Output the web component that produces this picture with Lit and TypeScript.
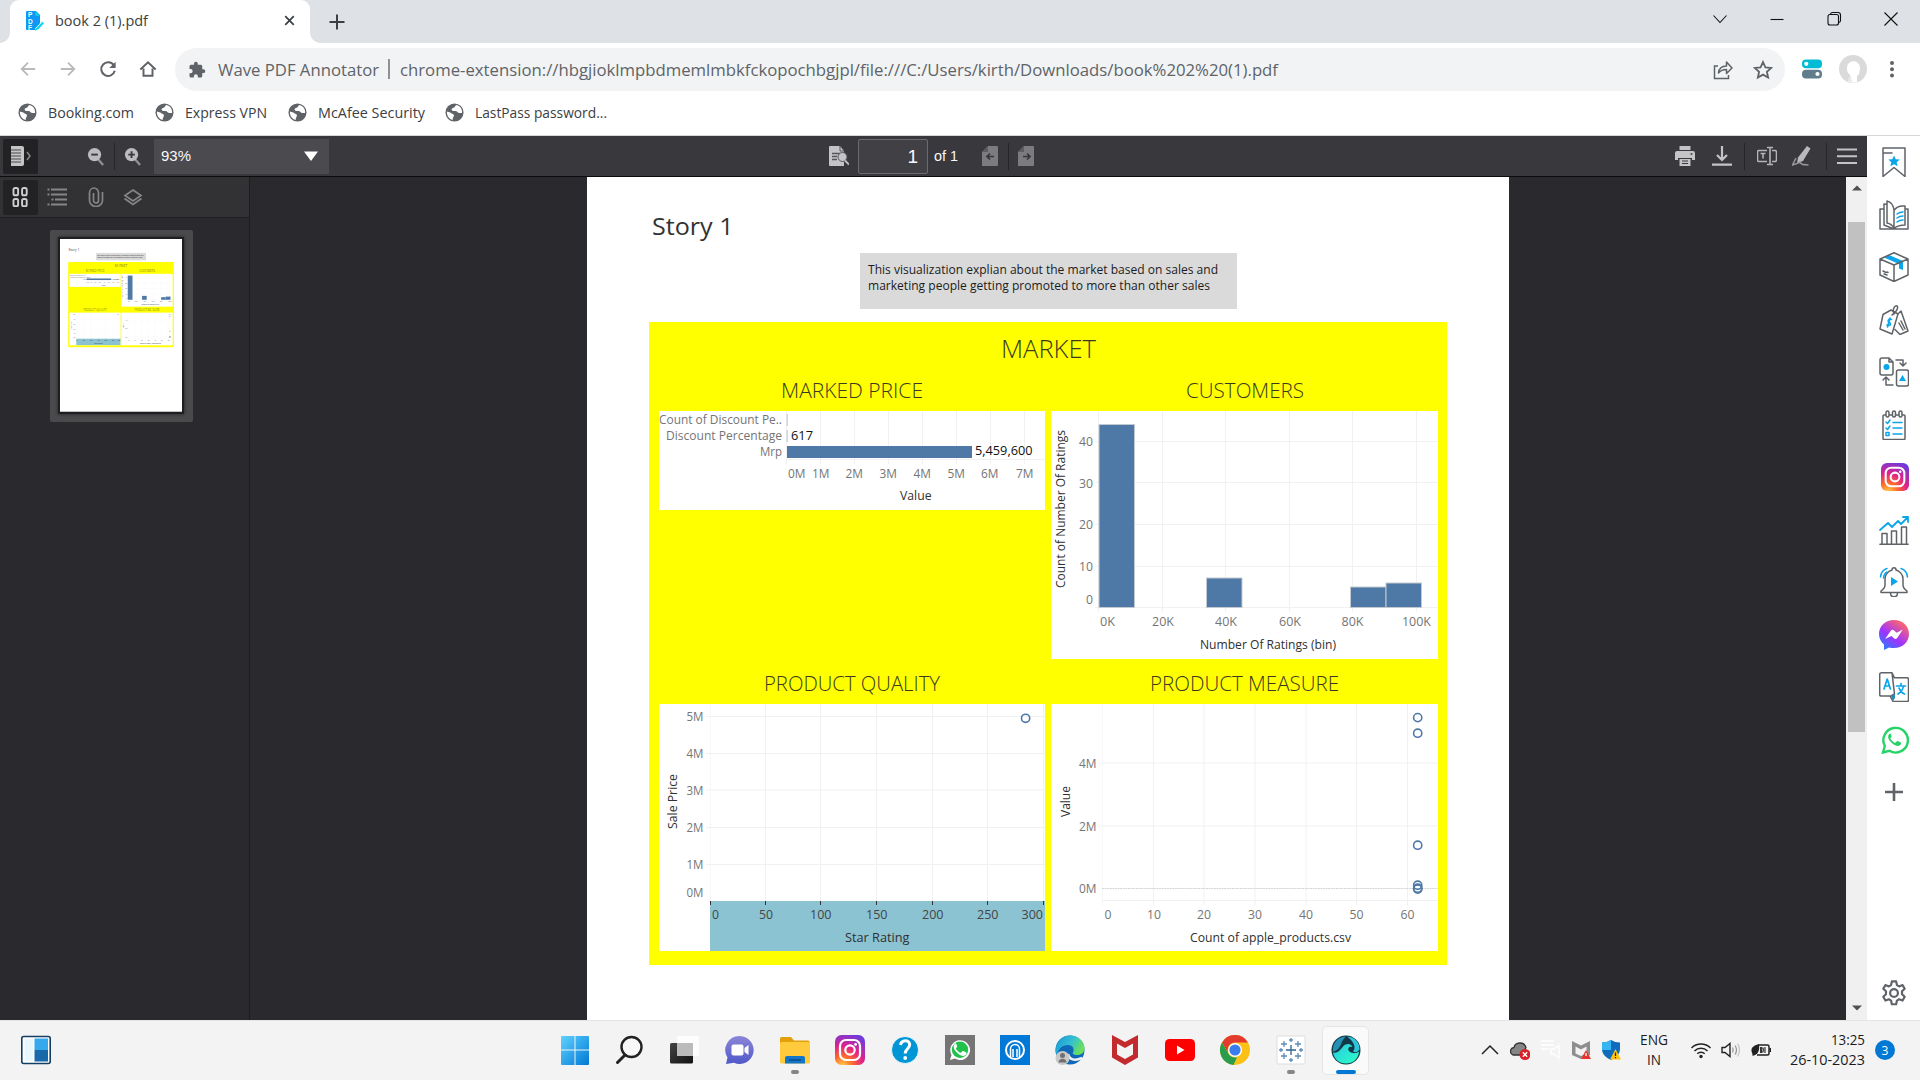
import { LitElement, html, svg, css, TemplateResult } from "lit";
import { customElement } from "lit/decorators.js";

/* A line of text set to an exact width. */
const fit = (text: string, width: number, size: number, weight = 400) => html`<svg class="fit" width=${width} height=${Math.round(size * 1.5)} overflow="visible"><text x="0" y=${Math.round(size * 1.1)} font-size=${size} font-weight=${weight} textLength=${width} lengthAdjust="spacingAndGlyphs" fill="currentColor">${text}</text></svg>`;

const icon = (size: number, box: string, body: unknown, cls = "") => html`<svg class="icon ${cls}" width=${size} height=${size} viewBox=${box}>${body}</svg>`;

/* ---------- report charts ---------- */
const label = (s: string, x: number, y: number, w: number, cls = "tick", size = 13) =>
  svg`<text class=${cls} x=${x} y=${y} font-size=${size} textLength=${w} lengthAdjust="spacingAndGlyphs">${s}</text>`;
const vlabel = (s: string, x: number, y: number, w: number) =>
  svg`<text class="axis" font-size="12.5" transform="translate(${x} ${y}) rotate(-90)" textLength=${w} lengthAdjust="spacingAndGlyphs">${s}</text>`;
const vline = (x: number, a: number, b: number) => svg`<path class="grid" d="M${x} ${a}V${b}"/>`;
const hline = (y: number, a: number, b: number) => svg`<path class="grid" d="M${a} ${y}H${b}"/>`;
const dot = (x: number, y: number) => svg`<circle cx=${x} cy=${y} r="4.1" fill="none" stroke="#4e79a7" stroke-width="1.6"/>`;

const markedPrice = svg`
  ${[786.5, 820.5, 854.5, 888.5, 922.5, 956.5, 990.5, 1024.5].map((x) => vline(x, 411, 464))}
  ${hline(459.5, 786, 1045)}
  <path d="M787.2 414v12M787.2 430v12" stroke="#c9d3df" stroke-width="1.4"/>
  <rect x="787" y="446" width="185" height="12" fill="#4e79a7"/>
  ${label("Count of Discount Pe..", 659, 424, 123)}
  ${label("Discount Percentage", 666, 440, 116)}
  ${label("Mrp", 760, 456, 22)}
  ${label("617", 791, 440, 22, "value")}
  ${label("5,459,600", 975, 455, 57.5, "value")}
  ${[788, 812, 845.5, 879.5, 913.5, 947.5, 981, 1016].map((x, i) => label(i + "M", x, 478, 17.5))}
  ${label("Value", 900, 500, 31.5, "axis")}`;

const customers = svg`
  ${[1098.5, 1162.5, 1225.5, 1289.5, 1352.5, 1416.5].map((x) => vline(x, 411, 612))}
  ${[441.5, 482.5, 524.5, 566.5].map((y) => hline(y, 1095, 1438))}
  ${hline(607.5, 1095, 1438)}
  ${[[1099, 425], [1206.5, 578.5], [1350.5, 587.5], [1386, 583.5]].map(([x, y]) =>
    svg`<rect x=${x} y=${y - 0.5} width="35.5" height=${608 - y} fill="#4e79a7" stroke="#c3c9d0"/>`)}
  ${vlabel("Count of Number Of Ratings", 1065, 588, 158)}
  ${label("40", 1079, 446, 14)}${label("30", 1079, 488, 14)}${label("20", 1079, 529, 14)}${label("10", 1079, 571, 14)}${label("0", 1086, 604, 7)}
  ${label("0K", 1100, 626, 15)}${label("20K", 1152, 626, 22)}${label("40K", 1215, 626, 22)}${label("60K", 1279, 626, 22)}${label("80K", 1341.5, 626, 22)}${label("100K", 1402, 626, 29)}
  ${label("Number Of Ratings (bin)", 1200, 649, 136, "axis")}`;

const quality = svg`
  ${[765.5, 820.5, 876.5, 932.5, 987.5, 1043.5].map((x) => vline(x, 704, 901))}
  <path class="grid" stroke-dasharray="1 1" d="M710.5 704V901"/>
  ${[716.5, 753.5, 790, 827.5, 864.5].map((y) => hline(y, 706, 1045))}
  <rect x="710" y="901" width="335.5" height="50.5" fill="#8cc3d2"/>
  ${[710.5, 765.5, 820.5, 876.5, 932.5, 987.5, 1043.5].map((x) => svg`<path d="M${x} 901v4" stroke="#333"/>`)}
  ${[721, 758, 795, 832, 869, 897].map((y, i) => label(5 - i + "M", 686.5, y, 17))}
  ${vlabel("Sale Price", 677, 829, 55)}
  ${([["0", 712, 7], ["50", 759, 14], ["100", 810, 21.5], ["150", 866, 21.5], ["200", 922, 21.5], ["250", 977, 21.5], ["300", 1021.5, 21.5]] as [string, number, number][]).map(([s, x, w]) => label(s, x, 919, w, "dark"))}
  ${label("Star Rating", 845, 942, 64.5, "axis")}
  ${dot(1025.6, 718.3)}`;

const measure = svg`
  ${[1153.5, 1204, 1255, 1306, 1356.5, 1407.5].map((x) => vline(x, 704, 905))}
  <path class="grid" stroke-dasharray="1 1" d="M1102.5 704V905"/>
  ${hline(763, 1099, 1438)}${hline(826, 1099, 1438)}${hline(900.5, 1102, 1438)}
  <path d="M1102 888.5H1438" stroke="#d6d6d6" stroke-dasharray="2 .6"/>
  ${label("4M", 1079, 768, 17.5)}${label("2M", 1079, 831, 17.5)}${label("0M", 1079, 893, 17.5)}
  ${vlabel("Value", 1070, 817, 31)}
  ${label("0", 1104.5, 919, 7)}${[1147, 1197, 1248, 1299, 1349.5, 1400.5].map((x, i) => label((i + 1) * 10 + "", x, 919, 14))}
  ${label("Count of apple_products.csv", 1190, 942, 161, "axis")}
  ${[717.6, 733.2, 845.2, 885.2, 888.2, 889].map((y) => dot(1417.7, y))}`;

@customElement("report-page")
class ReportPage extends LitElement {
  static styles = css`
    :host { display: block; width: 922px; height: 1304px; background: #fff; font-family: "Open Sans", "Noto Sans", sans-serif; color: #333; }
    .page { display: flex; flex-direction: column; padding: 61px 62px 0 62px; }
    .fit { display: block; flex: none; }
    .story { padding-left: 3px; height: 44px; }
    .note { align-self: center; width: 377px; height: 56px; box-sizing: border-box; background: #dadada; padding: 7px 0 0 8px; color: #1c1c1c; display: flex; flex-direction: column; margin-bottom: 13px; }
    .note .fit { height: 16px; }
    .board { background: #ff0; width: 798px; height: 643px; box-sizing: border-box; padding: 0 9px 0 10px; display: grid; grid-template-columns: 386px 387px; column-gap: 6px; grid-template-rows: 46px 43px 248px 45px 247px; color: #3a3a20; }
    .top { grid-column: 1 / 3; }
    .head { display: flex; justify-content: center; }
    .top { padding: 8px 1px 0 0; }
    .h1 { padding-top: 8px; }
    .h2 { padding-top: 10px; }
    .card { display: block; background: #fff; }
    .grid { stroke: #f1f1f1; stroke-width: 1; fill: none; }
    .tick { fill: #757575; }
    .value { fill: #111; }
    .axis { fill: #303030; }
    .dark { fill: #444; }
  `;
  render() {
    const card = (x: number, y: number, w: number, h: number, b: unknown) =>
      html`<svg class="card" width=${w} height=${h} viewBox="${x} ${y} ${w} ${h}">${b}</svg>`;
    return html`<div class="page">
      <div class="story">${fit("Story 1", 81.5, 24)}</div>
      <div class="note">
        ${fit("This visualization explian about the market based on sales and", 350, 12.5)}
        ${fit("marketing people getting promoted to more than other sales", 342, 12.5)}
      </div>
      <div class="board">
        <div class="head top">${fit("MARKET", 95, 25, 300)}</div>
        <div class="head h1">${fit("MARKED PRICE", 142, 20, 300)}</div>
        <div class="head h1">${fit("CUSTOMERS", 118, 20, 300)}</div>
        ${card(659, 411, 386, 99, markedPrice)}
        ${card(1051, 411, 387, 248, customers)}
        <div class="head h2">${fit("PRODUCT QUALITY", 176, 20, 300)}</div>
        <div class="head h2">${fit("PRODUCT MEASURE", 189, 20, 300)}</div>
        ${card(659, 704, 386, 247, quality)}
        ${card(1051, 704, 387, 247, measure)}
      </div>
    </div>`;
  }
}

/* ---------- shared glyphs ---------- */
const insta = (id: string) => svg`<defs><radialGradient id=${id} cx=".25" cy="1.05" r="1.15"><stop offset="0" stop-color="#ffd54a"/><stop offset=".3" stop-color="#fd6a2c"/><stop offset=".6" stop-color="#e0218a"/><stop offset="1" stop-color="#6a3be0"/></radialGradient></defs>
  <rect width="30" height="30" rx="6.5" fill="url(#${id})"/><rect x="5" y="5" width="20" height="20" rx="6" fill="none" stroke="#fff" stroke-width="2.2"/><circle cx="15" cy="15" r="4.7" fill="none" stroke="#fff" stroke-width="2.2"/><circle cx="20.6" cy="9.4" r="1.4" fill="#fff"/>`;
const phone = "M10.6 8.5c-.5 0-2 1.4-2 3.3 0 2.200 1.600 4.200 3.700 6.100 2.200 2 4.700 3.200 6.600 3 1.600-.2 2.600-1.300 2.600-2.600 0-.7-.2-.8-.6-1l-2.600-1.200c-.5-.2-.8-.1-1.100.3l-1 1.200c-.3.3-.6.3-1 .1-1.900-.9-3.200-2.200-4.200-3.900-.2-.4-.1-.6.200-.9l.8-1.100c.2-.3.2-.6 0-1l-1-2.300c-.2-.4-.4-.3-.4-.3z";

const globe = icon(19, "0 0 20 20", svg`<circle cx="10" cy="10" r="9.500" fill="#5f6368"/><path d="M2 9c2.200 1 3.500.6 4.600 1.800 1 1 2.700.7 2.800 2.200.1 1.800-1.400 2-1.300 4.900C4.300 17.200 1.800 13.500 2 9zM12 2.200c-2 .8-1 2.400-3 2.700-2.200.4-2.500 1.900-1.500 3 1.400 1.400 4.500-.4 5.600 1.700.8 1.500 3.200.9 4.900 1C18.500 6.500 15.800 3 12 2.200z" fill="#fff"/>`);

/* ---------- extension side bar ---------- */
const line = (b: unknown) => icon(30, "0 0 30 30", svg`<g fill="none" stroke="#5f6368" stroke-width="1.5" stroke-linejoin="round" stroke-linecap="round">${b}</g>`);
const sideIcons: TemplateResult[] = [
  line(svg`<path d="M4 1h22v28.500L15 20.500 4 29.500zM4 6h9"/><path fill="#0aa5ea" stroke="none" d="m15 8.500 1.700 3.700 4 .4-3 2.700.9 4-3.600-2-3.600 2 .9-4-3-2.700 4-.4z"/>`),
  line(svg`<path d="M5 9H1v20h28V9h-3M5 4v21l10 4V10.500c2-3.500 6-5 11-4.500v19c-4 0-8 1-11 3.500M5 4l3 .500M8 1c4 1 6.500 5 7 9v18c-2-3.500-4.500-4.500-7-5z"/><path stroke="#0aa5ea" d="M18 14c2-1.500 4-2 6-2M18 18c2-1.500 4-2 6-2M18 22c2-1.500 4-2 6-2"/>`),
  line(svg`<path fill="#0aa5ea" stroke="none" d="m5 5.500 5-2.500 14 6v9l-4-1.500V12z"/><path d="M15 .8 29 7v16l-14 6.500L1 23V7zM1 7l14 6 14-6M15 13v16M4 19l3 1.500M5 22l3 1M8 20l1 .500"/>`),
  line(svg`<path d="M4 9.500 12 5l7 4-6 20L1 24zM19 9l3-3 7 20-8 3.500-5-5M22 16l4 8M20 18l4 7"/><path d="M15 9c-2-5 1-9 3-8s-1 7-5 9"/><path stroke="#0aa5ea" stroke-width="1.600" d="M12.500 14.500c-3-1.500-4.500 2-2.200 3s1 4-2.300 2.500M11 13l-2.500 9"/>`),
  line(svg`<path d="M1 3c0-1 .5-2 2-2h7l4 4v11q0 2-2 2H3q-2 0-2-2zM10 1v4h4"/><rect x="17.500" y="13" width="12" height="16" rx="2"/><path d="M17 3h7v6m-3-3 3 3 3-3M14 28H7v-8m-3 3 3-3 3 3"/><circle cx="7.500" cy="10" r="3" fill="#0aa5ea" stroke="none"/><path fill="#0aa5ea" stroke="none" d="m23.500 18 3.500 6h-7z"/>`),
  line(svg`<rect x="4" y="5" width="22" height="24.500" rx="1"/><g fill="#fff"><rect x="7" y="1" width="3" height="6" rx="1.500"/><rect x="13.500" y="1" width="3" height="6" rx="1.500"/><rect x="20" y="1" width="3" height="6" rx="1.500"/></g><g stroke="#0aa5ea"><path d="m7 12 1.500 1.500L11 10M7 18l1.500 1.500L11 16M14 12.500h9M14 18h9M14 24h9"/><rect x="7" y="22.500" width="3" height="3"/></g>`),
  html`<span class="right">${icon(28, "0 0 30 30", insta("ig-side"))}</span>`,
  line(svg`<path d="M1 29.300h28M3 29V18.500h5V29M12.500 29V16h5v13M22.500 29V12h5v17"/><path stroke="#0aa5ea" stroke-width="1.800" d="m1 15 8-7 4 4 6-6 3 3 7-7m-5 0h5v5"/>`),
  line(svg`<path d="M2 24c3-2 4-3 4-6v-6c0-5 4-8 7-9 0-3 4-3 4 0 3 1 7 4 7 9v6c0 3 1 4 4 6v1.500H2zM11.500 26c0 5 7 5 7 0"/><path fill="#0aa5ea" stroke="none" d="m12 10 7 4.500-7 4.500z"/><path stroke="#0aa5ea" d="M1.500 10C2 5.500 4.500 2.500 8 1.500M4.500 11C5 7.500 6 6 8 5M28.500 10C28 5.500 25.500 2.500 22 1.500"/>`),
  icon(30, "0 0 30 30", svg`<defs><linearGradient id="msg" x1="0" y1="1" x2=".7" y2="0"><stop stop-color="#0a8cff"/><stop offset=".5" stop-color="#a033ff"/><stop offset="1" stop-color="#ff6968"/></linearGradient></defs><path fill="url(#msg)" d="M15 0C6.500 0 0 6 0 14c0 4.500 2 8 5 10.500V30l5-2.500c1.500.4 3 .6 5 .6 8.500 0 15-6 15-14S23.500 0 15 0z"/><path fill="#fff" d="m6 19 6-8.500c.6-.8 1.600-1 2.400-.4l3.400 2.700 6-3.300-5.800 8.800c-.6.8-1.600 1-2.400.4l-3.300-2.600z"/>`),
  line(svg`<path d="M2.500.8H13l2.500 5H28q1.500 0 1.500 1.500V28q0 1.500-1.500 1.500H14L11 24H2Q.7 24 .7 22.500V2.500Q.7.800 2.500.8zM13 .8l2.500 21-4.500 2.500"/><path fill="#2888b4" d="m12 24 4-2v4l-2 3z" stroke="none"/><g stroke="#0aa5ea" stroke-width="1.700"><path d="m5 17 3.200-10 3.200 10M6 14h4.500M17.500 14h9M22 11.500V14M19 22c3-2 5-4.500 5.500-8M20 16c1 3 3 5 5.500 6"/></g>`),
  html`<span class="right">${icon(28, "0 0 28 28", svg`<path fill="#fff" stroke="#25d366" stroke-width="2.400" d="M2 26.500 3.800 20A12.300 12.300 0 1 1 8.400 24.800z"/><path fill="#25d366" d=${phone} transform="translate(-1.500 -1)"/>`)}</span>`,
  icon(30, "0 0 30 30", svg`<path d="M15 6v18M6 15h18" stroke="#5f6368" stroke-width="2.600"/>`),
];
const gear = icon(26, "0 0 24 24", svg`<g fill="none" stroke="#5f6368" stroke-width="2"><circle cx="12" cy="12" r="3.600"/><path stroke-linejoin="round" d="M10 1.300h4l.7 3.400 2 1.200 3.200-1.200 2 3.400-2.500 2.300v2.800l2.500 2.300-2 3.500-3.200-1.200-2 1.200-.7 3.400h-4l-.7-3.400-2-1.200L4.100 19l-2-3.500 2.500-2.300v-2.800L2.100 8.100l2-3.400 3.200 1.200 2-1.200z"/></g>`);

/* ---------- taskbar ---------- */
const t = (b: unknown) => icon(30, "0 0 30 30", b);
const tasks: TemplateResult[] = [
  t(svg`<defs><linearGradient id="win" x2="1" y2="1"><stop stop-color="#5fd2ff"/><stop offset="1" stop-color="#0078d4"/></linearGradient></defs><path fill="url(#win)" d="M1 2q0-1 1-1h12.500v13.500H1zM15.500 1H28q1 0 1 1v12.500H15.500zM1 15.500h13.500V30H2q-1 0-1-1zM15.500 15.500H29V29q0 1-1 1H15.500z"/>`),
  t(svg`<circle cx="16.500" cy="12" r="10" fill="#f8f8f8" stroke="#222" stroke-width="2.400"/><path d="M10 20 2.500 27.500" stroke="#222" stroke-width="3" stroke-linecap="round"/>`),
  t(svg`<defs><linearGradient id="tv" y2="1"><stop stop-color="#444"/><stop offset="1" stop-color="#111"/></linearGradient></defs><rect x="0" y="8" width="23" height="20.500" rx="1.500" fill="url(#tv)"/><rect x="7" y="1" width="22" height="20" rx="1.500" fill="#fff" opacity=".8"/><rect x="7" y="8" width="16" height="13" fill="#bbb"/>`),
  t(svg`<defs><linearGradient id="chat" x2="0" y2="1"><stop stop-color="#8d86d8"/><stop offset="1" stop-color="#5059c9"/></linearGradient></defs><path fill="url(#chat)" d="M15 1a14 14 0 1 1-6 26.800L1 29l1.500-6.500A14 14 0 0 1 15 1z"/><rect x="6.500" y="9.500" width="12" height="11" rx="2" fill="#fff"/><path fill="#fff" d="m19.500 13 4-3v10l-4-3z"/>`),
  t(svg`<path fill="#e3a008" d="M0 3.500Q0 2 1.500 2H11l3 3.500h14q1.500 0 1.500 1.500v5H0z"/><rect y="7" width="30" height="21.500" rx="1.500" fill="#ffcb3d"/><path fill="#1276c8" d="M5 28.500V23q0-2 2-2h16q2 0 2 2v5.500z"/><path d="M9 25h12" stroke="#0a4d8c" stroke-width="1.600"/>`),
  t(insta("ig-task")),
  t(svg`<circle cx="15" cy="15" r="13.500" fill="#0096d6" stroke="#fff" stroke-width=".8"/><path d="M10.500 10c1-5.500 9-5.500 9.200-.5 0 4-4.500 4.500-4.500 9" fill="none" stroke="#fff" stroke-width="3"/><circle cx="15.200" cy="23" r="1.900" fill="#fff"/>`),
  t(svg`<rect width="30" height="30" fill="#757575"/><path fill="#fff" d="m5 25 1.500-5A9.900 9.900 0 1 1 10 23.600z"/><circle cx="15" cy="14.800" r="8.200" fill="#1fc14b"/><path fill="#fff" d=${phone}/>`),
  t(svg`<rect width="30" height="30" fill="#0078d7"/><circle cx="15" cy="15" r="9" fill="none" stroke="#fff" stroke-width="2"/><path d="M10.500 22V14a4.500 4.500 0 0 1 9 0v8M13 22v-8M17 22v-8" fill="none" stroke="#fff" stroke-width="1.500"/>`),
  t(svg`<defs><linearGradient id="edge" x2="1" y2=".4"><stop stop-color="#1593d8"/><stop offset=".6" stop-color="#35c1d0"/><stop offset="1" stop-color="#6adf5e"/></linearGradient></defs><circle cx="15" cy="15" r="14.500" fill="#1068b8"/><path fill="url(#edge)" d="M.8 13C2 5 8 .5 15 .5c8 0 14.500 5.500 14.500 12.500 0 5-3.500 7-7.500 7-3 0-5-1-4-2.500C20 13 17 10 13 10 7 10 3 14 2 20Q0 17 .8 13z"/><path d="M13 19c1 6 7 7 14 4" stroke="#f3f3f3" stroke-width="2.500" fill="none"/><circle cx="7.500" cy="23" r="7" fill="#c9c9c9"/><circle cx="7.500" cy="20.500" r="2.500" fill="#707070"/><path fill="#707070" d="M3.500 27.500c0-5 8-5 8 0z"/>`),
  t(svg`<path fill="#c32a2e" d="m2 0 13 7L28 0v22.500L15 30 2 22.500z"/><path fill="#f3f3f3" d="m7 8.500 8 4.500 8-4.500v11L15 24l-8-4.500z"/>`),
  t(svg`<rect y="4" width="30" height="22" rx="4.500" fill="#f00"/><path fill="#fff" d="m12 10.500 7.500 4.500-7.500 4.500z"/>`),
  t(svg`<circle cx="15" cy="15" r="15" fill="#fbc116"/><path fill="#e33b2e" d="M2 7.500A15 15 0 0 1 28 7.500H15a7.500 7.500 0 0 0-6.500 11z"/><path fill="#2a9d4c" d="M2 7.500 8.500 18.800A7.500 7.500 0 0 0 17 22.200L13.500 30A15 15 0 0 1 2 7.500z"/><circle cx="15" cy="15" r="7" fill="#fff"/><circle cx="15" cy="15" r="5.600" fill="#3b7ded"/>`),
  t(svg`<rect x="1" y="1" width="28" height="28" rx="1" fill="#fff" stroke="#ddd"/><g stroke="#2f6690" stroke-width="1.300"><path d="M15 10v10M10 15h10"/><path d="M15 3v4M13 5h4M15 23v4M13 25h4M5 13v4M3 15h4M25 13v4M23 15h4M8 6v6M5 9h6M22 6v6M19 9h6M8 18v6M5 21h6M22 18v6M19 21h6" stroke="#5b8db8"/></g>`),
  t(svg`<defs><linearGradient id="wave" y2="1"><stop stop-color="#27c9df"/><stop offset="1" stop-color="#2fffc8"/></linearGradient></defs><circle cx="15" cy="15" r="14.500" fill="#123845"/><path fill="#258fb4" d="M2 17C1 8 7 1.500 15 1.500 9.500 6 11 11 6 15z"/><path fill="url(#wave)" d="M2 17.500C7 18.500 9 15 12 11.500c3.500-3.500 8-3 9.500.5-4-1.500-5.500 2-3 4.500 3 2.500 7 2 9.500 0C27.500 24 22 28.500 15 28.500S3 24 2 17.500z"/><path fill="#2fc5da" d="M16 1.500c8 .5 13 6.500 12.500 13C26 18 23 17.500 22 16.500 26 12 22 6 16 1.500z"/>`),
];

@customElement("app-root")
class AppRoot extends LitElement {
  static styles = css`
    :host { display: block; width: 1920px; height: 1080px; overflow: hidden; font-family: "Open Sans", "Noto Sans", sans-serif; color: #3c4043; background: #fff; }
    .screen { display: flex; flex-direction: column; width: 1920px; height: 1080px; }
    .row { display: flex; align-items: center; }
    .fit, .icon { display: block; flex: none; }
    .slot { display: flex; align-items: center; justify-content: center; flex: none; }
    .grow { flex: 1; }

    .tabs { height: 43px; background: #dee1e6; padding-left: 10px; flex: none; }
    .tab { width: 300px; height: 43px; background: #fff; border-radius: 9px 9px 0 0; padding: 0 11px 2px 15px; box-sizing: border-box; gap: 10px; position: relative; }
    .tab::before, .tab::after { content: ""; position: absolute; bottom: 0; width: 10px; height: 10px; }
    .tab::before { left: -10px; background: radial-gradient(circle at 0 0, transparent 9.500px, #fff 10px); }
    .tab::after { right: -10px; background: radial-gradient(circle at 100% 0, transparent 9.500px, #fff 10px); }
    .win { width: 57.200px; height: 37px; align-self: flex-start; }

    .nav { height: 52px; padding: 0 0 0 8px; flex: none; }
    .nav .btn { width: 40px; height: 52px; }
    .omni { width: 1610px; height: 43px; margin-left: 7px; box-sizing: border-box; border-radius: 22px; background: #f1f3f4; color: #5f6368; padding: 1px 12px 0 13px; flex: none; }
    .omni .fit { margin-left: 12px; }
    .omni .bar { width: 1.500px; height: 20px; background: #8d9297; margin: 0 0 1px 9px; }
    .omni .url { margin-left: -2px; }
    .marks { height: 41px; box-sizing: border-box; padding: 0 0 6px 18px; border-bottom: 1px solid #d5d6d8; color: #3c4043; flex: none; }
    .mark { gap: 11px; height: 34px; }

    .body { display: flex; height: 884px; flex: none; }
    .viewer { width: 1867px; display: flex; flex-direction: column; flex: none; }
    .tool { height: 41px; box-sizing: border-box; background: #38383d; border-bottom: 1px solid #0c0c0d; color: #f9f9fa; padding-left: 3px; font-family: "Liberation Sans", Arial, sans-serif; flex: none; }
    .tool .fit { margin-bottom: 2px; }
    .on { width: 35px; height: 35px; border-radius: 2px; background: #222225; }
    .sep { width: 1px; height: 27px; background: #25252a; flex: none; }
    .zoom { width: 175px; height: 35px; background: #4a4a4f; box-sizing: border-box; padding: 0 11px 0 7px; margin-left: 11px; justify-content: space-between; }
    .num { width: 70px; height: 35px; box-sizing: border-box; border: 1px solid #6b6b70; border-radius: 2px; background: #404045; font-size: 19px; text-align: right; line-height: 33px; padding-right: 9px; margin: 0 6px 0 9px; }
    .main { display: flex; height: 843px; background: #2a2a2e; }
    .left { width: 250px; box-sizing: border-box; border-right: 1px solid #1c1c1f; flex: none; }
    .lefttool { height: 41px; box-sizing: border-box; background: #323234; border-bottom: 1px solid #1f1f21; padding-left: 3px; }
    .thumb { margin: 12px 0 0 50px; width: 143px; height: 192px; box-sizing: border-box; background: #4a4a4c; border-radius: 2px; padding: 7px 0 0 8px; }
    .mini { width: 122px; height: 173px; overflow: hidden; border: 2px solid #1f1f21; box-shadow: 0 0 3px #222; }
    .mini report-page { transform: scale(0.1324); transform-origin: 0 0; }
    .canvas { flex: 1; overflow: hidden; display: flex; justify-content: center; align-items: flex-start; }
    .canvas report-page { margin-top: -29px; flex: none; }
    .scroll { width: 22px; margin-right: -1px; background: #f0f0f0; flex: none; display: flex; flex-direction: column; align-items: center; justify-content: space-between; padding: 6px 2px 7px 1px; box-sizing: border-box; }
    .thumbbar { width: 17px; height: 510px; background: #c1c1c1; margin-top: 29px; margin-bottom: auto; }
    .side { flex: 1; display: flex; flex-direction: column; align-items: center; background: #fff; padding: 11px 0 14px 0; box-sizing: border-box; gap: 22.500px; }
    .side .right { padding: 1px 0 1px 3px; }
    .side .end { margin-top: auto; }

    .task { height: 60px; background: #f3f3f3; box-sizing: border-box; border-top: 1px solid #e4e4e4; color: #1b1b1b; flex: none; }
    .widget { width: 547.800px; padding-left: 21px; box-sizing: border-box; flex: none; }
    .task .widget, .app { padding-bottom: 1px; }
    .app { width: 55.030px; height: 59px; box-sizing: border-box; flex-direction: column; position: relative; flex: none; }
    .app.active::before { content: ""; position: absolute; inset: 5px 4px; background: #fafafa; border: 1px solid #e6e6e6; border-radius: 5px; box-sizing: border-box; }
    .app .icon { position: relative; }
    .mk { position: absolute; bottom: 6px; width: 8px; height: 4px; border-radius: 2px; background: #868686; }
    .active .mk { width: 20px; background: #0078d4; }
    .tray { margin-left: 102px; padding-bottom: 1px; }
    .tray .slot { width: 30.200px; }
    .lang, .clock { display: flex; flex-direction: column; align-items: center; padding-bottom: 4px; }
    .lang { width: 57px; }
    .lang .fit, .clock .fit { height: 20px; }
    .clock { width: 88.500px; align-items: flex-end; }
    .tray .badge { width: 20px; height: 20px; border-radius: 50%; background: #0078d4; color: #fff; font-size: 12px; margin-left: 10px; }
  `;

  render() {
    const glyph = (b: unknown, w = 20) => icon(w, "0 0 20 20", b);
    const slot = (w: number, b: unknown) => html`<div class="slot" style="width:${w}px">${b}</div>`;
    const marks: [string, number, number][] = [["Booking.com", 86, 21], ["Express VPN", 82, 21], ["McAfee Security", 107, 20], ["LastPass password...", 132, 0]];
    return html`<div class="screen">
      <div class="row tabs">
        <div class="row tab">
          ${icon(20, "0 0 20 20", svg`<path fill="#0d99f2" d="M1 1q0-1 1-1h9l4 4v8l-5 7H2q-1 0-1-1z"/><path fill="#12d5ee" d="M10.500.5v4.300h4zM10 19.800l1-3.500 6-6 2 2-5.500 6z"/><path d="m10 18 8-8" stroke="#fff" stroke-width=".8"/><g fill="#fff" font-size="6.500" font-weight="800" font-family="Liberation Sans"><text x="3" y="6">P</text><text x="3" y="12.500">D</text><text x="3" y="19">F</text></g>`)}
          ${fit("book 2 (1).pdf", 93, 15)}
          <div class="grow"></div>
          ${glyph(svg`<path d="m5.500 5.500 9 9m0-9-9 9" stroke="#3c4043" stroke-width="1.800"/>`, 19)}
        </div>
        ${slot(54, glyph(svg`<path d="M10 2.500v15M2.500 10h15" stroke="#3c4043" stroke-width="2"/>`))}
        <div class="grow"></div>
        ${[svg`<path d="m3.500 6.500 6.500 7 6.500-7" />`, svg`<path d="M3.500 10.500h13"/>`, svg`<rect x="4" y="5.500" width="10.500" height="10.500" rx="2"/><path d="M6.500 5q.5-1.500 2-1.500H14q2.500 0 2.500 2.500v5.500q0 1.500-1.500 2"/>`, svg`<path d="m3.500 3.500 13 13m0-13-13 13"/>`].map((b) => html`<div class="slot win">${glyph(svg`<g fill="none" stroke="#111" stroke-width="1.100">${b}</g>`)}</div>`)}
      </div>

      <div class="row nav">
        ${[svg`<path stroke="#bababa" d="M18 10H3m7-7-7 7 7 7"/>`, svg`<path stroke="#bababa" d="M2 10h15m-7-7 7 7-7 7"/>`, svg`<path stroke="#5f6368" stroke-width="2.200" d="M16.500 6A7.600 7.600 0 1 0 17.500 12"/><path fill="#5f6368" d="M18.500 2v7h-7z"/>`, svg`<path stroke="#5f6368" stroke-width="2.200" d="M5 9.500v8h10v-8M1.500 10.500 10 2.500l8.500 8"/>`].map((b) => html`<div class="slot btn">${glyph(svg`<g fill="none" stroke-width="2">${b}</g>`, 18)}</div>`)}
        <div class="row omni">
          ${icon(18, "0 0 24 24", svg`<path fill="#5f6368" d="M20.500 11H19V7a2 2 0 0 0-2-2h-4V3.500a2.500 2.500 0 0 0-5 0V5H4a2 2 0 0 0-2 2v3.800h1.500a2.700 2.700 0 0 1 0 5.400H2V20a2 2 0 0 0 2 2h3.800v-1.500a2.700 2.700 0 0 1 5.400 0V22H17a2 2 0 0 0 2-2v-4h1.500a2.500 2.500 0 0 0 0-5z"/>`)}
          ${fit("Wave PDF Annotator", 161, 17)}<div class="bar"></div>
          <div class="url">${fit("chrome-extension://hbgjioklmpbdmemlmbkfckopochbgjpl/file:///C:/Users/kirth/Downloads/book%202%20(1).pdf", 878, 17)}</div>
          <div class="grow"></div>
          ${slot(40, glyph(svg`<g fill="none" stroke="#5f6368" stroke-width="1.500"><path d="M5 6H1.500v12.500h14V15"/><path stroke-linejoin="round" d="M5.500 13c.5-4.500 3.500-7 8-7V2l5.500 6-5.500 5.500V9.500c-3.500 0-6 1-8 3.500z"/></g>`))}
          ${slot(10, html``)}
          ${icon(20, "0 0 20 20", svg`<path fill="none" stroke="#5f6368" stroke-width="1.800" d="m10 2 2.400 5.300 5.800.6-4.300 3.900 1.200 5.700L10 14.600l-5.100 2.900 1.200-5.700-4.300-3.900 5.800-.6z"/>`)}
        </div>
        ${slot(54, icon(20, "0 0 20 20", svg`<rect y=".5" width="20" height="8.700" rx="4" fill="#00bcd4"/><circle cx="4.300" cy="4.800" r="2.100" fill="#fff"/><rect y="10.700" width="20" height="8.700" rx="4" fill="#607d8b"/><circle cx="15.500" cy="15" r="2.100" fill="#fff"/>`))}
        ${slot(28, icon(28, "0 0 28 28", svg`<circle cx="14" cy="14" r="14" fill="#d9dad9"/><path fill="#fff" d="M8 13c0-9 13-9 13 0 0 5-2 8-3 8v6.500h-7V25c2 0 1-4-1-6s-2-4-2-6z"/><path fill="#e6eef5" d="M10 22c3 0 3 3 3 5.500H9z"/>`))}
        ${slot(50, icon(20, "0 0 20 20", svg`<g fill="#5f6368"><circle cx="10" cy="4" r="2"/><circle cx="10" cy="10.200" r="2"/><circle cx="10" cy="16.400" r="2"/></g>`))}
      </div>

      <div class="row marks">
        ${marks.map(([s, w, g]) => html`<div class="row mark" style="margin-right:${g}px">${globe}${fit(s, w, 15)}</div>`)}
      </div>

      <div class="body">
        <div class="viewer">
          <div class="row tool">
            <div class="slot on">${icon(22, "0 0 22 22", svg`<path fill="#c4c4c6" d="M1 1h11q2 0 2 2v16q0 2-2 2H1z"/><path d="M1 5h10M1 8h10M1 11h10M1 14h10M1 17h10" stroke="#4a4a4d"/><path d="m17 7 3 4-3 4" fill="none" stroke="#8a8a8c" stroke-width="1.500"/>`)}</div>
            ${slot(76, html`<span class="slot" style="padding-left:39px">${glyph(svg`<path d="m12 12 6 7" stroke="#909092" stroke-width="2.400"/><circle cx="9" cy="8" r="7" fill="#bcbcbe"/><path d="M5.500 8h7" stroke="#3a3a3e" stroke-width="2"/>`, 19)}</span>`)}
            <div class="sep"></div>
            ${slot(28, html`<span class="slot" style="padding-left:7px">${glyph(svg`<path d="m12 12 6 7" stroke="#909092" stroke-width="2.400"/><circle cx="9" cy="8" r="7" fill="#bcbcbe"/><path d="M5.500 8h7M9 4.500v7" stroke="#3a3a3e" stroke-width="2"/>`, 19)}</span>`)}
            <div class="row zoom">${fit("93%", 30, 15)}${icon(14, "0 0 14 14", svg`<path fill="#fff" d="M0 2.500h14L7 12z"/>`)}</div>
            ${slot(500, html``)}
            ${icon(20, "0 0 20 20", svg`<path fill="#c4c4c6" d="M0 1q0-1 1-1h10l4 5v15H1q-1 0-1-1z"/><path d="M11 0v5h4" stroke="#555" fill="none"/><path d="M3 7.500h8M3 10.500h5M3 13.500h5" stroke="#55555a" stroke-width="1.300"/><circle cx="13.500" cy="11" r="4.500" fill="#c4c4c6" stroke="#55555a"/><path d="m16 14.500 4 4" stroke="#c4c4c6" stroke-width="1.800"/>`)}
            <div class="num">1</div>
            ${fit("of 1", 24, 15)}
            ${slot(24, html``)}
            ${["m8 7.500-3 3 3 3M5 10.500h7", "m9 7.500 3 3-3 3M12 10.500H5"].map((d, i) => html`${i ? html`<div class="sep" style="margin:0 9px 0 10px"></div>` : ""}<svg class="icon" width="16" height="20" viewBox="0 0 16 20"><path fill="#7c7c80" d="M6 0h9q1 0 1 1v18q0 1-1 1H0V6z"/><path fill="#5d5d61" d="M0 6h6V0z"/><path d=${d} fill="none" stroke="#35353a" stroke-width="1.700"/></svg>`)}
            <div class="grow"></div>
            ${glyph(svg`<path fill="#c4c4c6" d="M4.500 0h11v4h-11zM0 7q0-2 2-2h16q2 0 2 2v7h-3v-2H3v2H0zM4.500 13h11v7h-11z"/><path d="M7 15h6M7 17.500h6" stroke="#38383d"/><circle cx="16.500" cy="8" r="1" fill="#444"/>`)}
            ${slot(54, glyph(svg`<path d="M10 0v14M5 9l5 5 5-5M0 18.700h20" fill="none" stroke="#c4c4c6" stroke-width="2.200"/>`))}
            <div class="sep" style="margin-right:11px;margin-left:-5px"></div>
            ${slot(22, glyph(svg`<path d="M10 4.500H2q-1.500 0-1.500 1.500v8q0 1.500 1.500 1.500h8M15 4.500h3q1.500 0 1.500 1.500v8q0 1.500-1.500 1.500h-3M13 2v16M10 1.500h6M10 18.500h6M3.500 7.500h5M6 7.500v5" fill="none" stroke="#b4b4b6" stroke-width="1.600"/>`))}
            ${slot(48, glyph(svg`<path fill="#b9b9bb" d="m15 0 3.500 2.500L11 15l-6 2 1-5.500z"/><path d="m4 12-3.500 7 6-2c1-3 3 3 6 1.500l4 .5" fill="none" stroke="#97979a" stroke-width="1.500"/>`))}
            <div class="sep"></div>
            ${slot(40, glyph(svg`<path d="M0 3.500h20M0 10.200h20M0 17h20" stroke="#c4c4c6" stroke-width="2"/>`))}
          </div>
          <div class="main">
            <div class="left">
              <div class="row lefttool">
                <div class="slot on">${glyph(svg`<g fill="none" stroke="#cfcfd0" stroke-width="1.900"><rect x="2.500" y="1" width="4.600" height="7.300" rx="1.600"/><rect x="11.100" y="1" width="4.600" height="7.300" rx="1.600"/><rect x="2.500" y="12" width="4.600" height="7.300" rx="1.600"/><rect x="11.100" y="12" width="4.600" height="7.300" rx="1.600"/></g>`)}</div>
                ${slot(37, glyph(svg`<path d="M4 2.500h16M4 7.500h16M8 12.500h12M4 17.500h16M.5 2.500h2M.5 7.500h2M4.500 12.500h2M.5 17.500h2" stroke="#858587" stroke-width="1.800"/>`))}
                ${slot(41, glyph(svg`<path d="M3.500 6v7.500a6.500 6 0 0 0 13 0V5M3.500 6a4.500 5 0 0 1 9 0v7.500a2.500 2.500 0 0 1-5 0V6" fill="none" stroke="#858587" stroke-width="1.700"/>`))}
                ${slot(34, glyph(svg`<path d="m10 3 8 5.500-8 5.500-8-5.500zM1.500 11.500 10 17.500l8.500-6" fill="none" stroke="#858587" stroke-width="1.700"/>`))}
              </div>
              <div class="thumb"><div class="mini"><report-page></report-page></div></div>
            </div>
            <div class="canvas"><report-page></report-page></div>
            <div class="scroll">
              ${icon(10, "0 0 10 10", svg`<path fill="#505050" d="M0 7.500h10L5 2.500z"/>`)}
              <div class="thumbbar"></div>
              ${icon(10, "0 0 10 10", svg`<path fill="#505050" d="M0 2.500h10L5 7.500z"/>`)}
            </div>
          </div>
        </div>
        <div class="side">${sideIcons}<div class="end">${gear}</div></div>
      </div>

      <div class="row task">
        <div class="widget">${t(svg`<rect x=".8" y="1.500" width="28.400" height="27" rx="2" fill="#fff" stroke="#123e63" stroke-width="1.600"/><rect x="3.500" y="4" width="8.500" height="22" fill="#e9f6fd"/><rect x="13.500" y="3.500" width="13.500" height="11.500" fill="#35a8ee"/><rect x="13.500" y="15" width="13.500" height="11.500" fill="#1769aa"/>`)}</div>
        ${tasks.map((b, i) => html`<div class="slot app ${i === 14 ? "active" : ""}">${b}${[4, 13, 14].includes(i) ? html`<span class="mk"></span>` : ""}</div>`)}
        <div class="row tray">
          ${[
            svg`<path d="m2 14 8-8 8 8" fill="none" stroke="#222" stroke-width="1.500"/>`,
            svg`<path fill="#858585" stroke="#333" stroke-width="1.300" d="M3 15C-1 13 0 8 4 7.500 5 2 14 1 16 7.500L12 15z"/><circle cx="15" cy="14.500" r="5.500" fill="#d92027"/><path d="m12.800 12.300 4.400 4.400m0-4.400-4.400 4.400" stroke="#fff" stroke-width="1.400"/>`,
            svg`<path d="M0 1h13M0 5h13M0 9h8M10 9h3l5-4v13l-5-4h-3z" fill="none" stroke="#fff" stroke-width="1.300"/>`,
            svg`<path fill="#8e8e90" d="m1 1 9 4.500L19 1v14l-9 4-9-4z"/><path fill="#f3f3f3" d="m4.500 6.500 5.500 3 5.500-3v7L10 16l-5.500-2.500z"/><path fill="#e8342f" d="m15 10 5 9H10z"/><path d="M15 13v3" stroke="#fff" stroke-width="1.300"/>`,
            svg`<path fill="#0f6cbd" d="M1 2.500q5 0 9-2.500 4 2.500 9 2.500V9c0 6-5 9-9 11-4-2-9-5-9-11z"/><path fill="#35b5f1" d="M1 2.500Q6 2.500 10 0v10H1z"/><path fill="#ffc20e" d="m14.500 9 5.500 10.500H9z"/><path d="M14.500 12.500V16M14.500 17v1.300" stroke="#222" stroke-width="1.200"/>`,
          ].map((b) => html`<div class="slot">${glyph(b)}</div>`)}
          <div class="lang">${fit("ENG", 28, 15)}${fit("IN", 14, 15)}</div>
          <div class="slot" style="width:3px"></div>
          ${[
            svg`<g fill="none" stroke="#222" stroke-width="1.500"><path d="M.5 8a13.400 13.400 0 0 1 19 0M3.500 11a9.200 9.200 0 0 1 13 0M6.300 13.800a5.200 5.200 0 0 1 7.400 0"/></g><circle cx="10" cy="16.500" r="1.700" fill="#222"/>`,
            svg`<path d="M1 7.500h3L9 3.500v13l-5-4H1z" fill="none" stroke="#222" stroke-width="1.400"/><path d="M11.500 7.500q1.500 2.500 0 5M14 5.500q3 4.500 0 9" fill="none" stroke="#999" stroke-width="1.300"/><path d="M16.500 3.500q4 6.500 0 13" fill="none" stroke="#c8c8c8" stroke-width="1.300"/>`,
            svg`<path d="M7 5h9.500q1.500 0 1.500 1.500v7q0 1.500-1.500 1.500H6" fill="none" stroke="#222" stroke-width="1.500"/><path d="M19.500 8v4M10 7v6" stroke="#222" stroke-width="1.800"/><path fill="#222" d="M8 4C4 5 0 7 .5 11c.2 2 1.500 3 1 5 4-1 6-3 6.500-6.500C8.500 7.500 8 6 8 4z"/><path d="M11.500 7.500q2 2.500 0 5M14 7v6" fill="none" stroke="#444" stroke-width="1.300"/>`,
          ].map((b) => html`<div class="slot">${glyph(b)}</div>`)}
          <div class="clock">${fit("13:25", 34, 15)}${fit("26-10-2023", 75, 15)}</div>
          <div class="slot badge">3</div>
        </div>
      </div>
    </div>`;
  }
}
